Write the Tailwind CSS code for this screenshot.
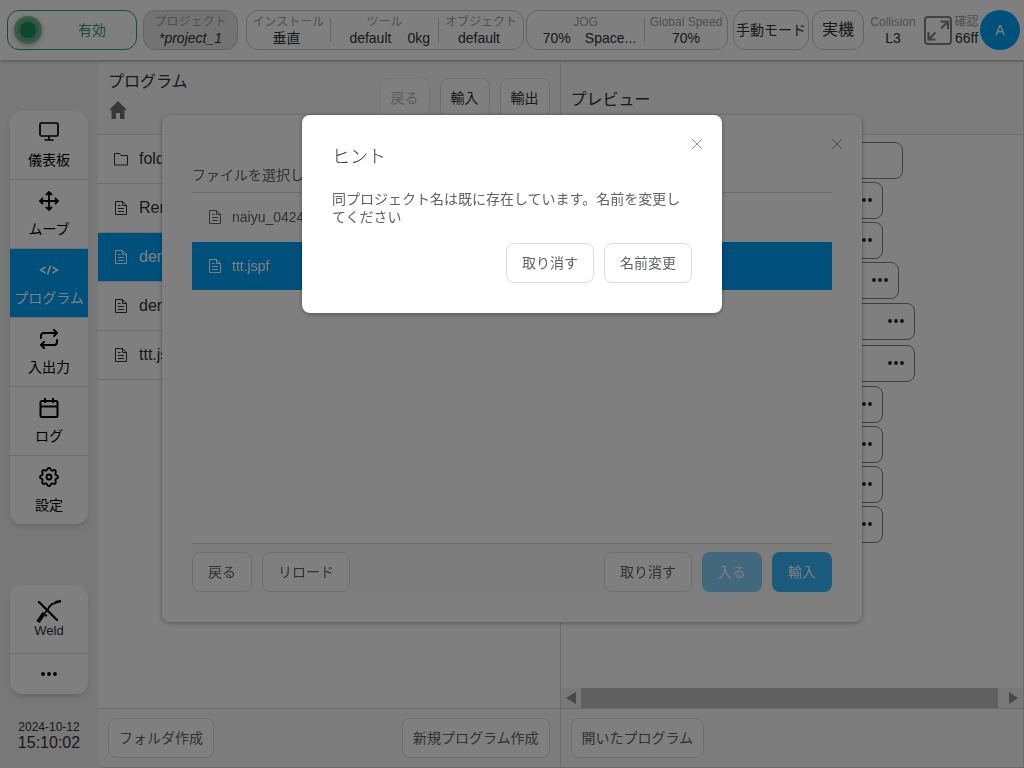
<!DOCTYPE html>
<html lang="ja">
<head>
    <meta charset="UTF-8">
    <meta name="viewport" content="width=device-width, initial-scale=1.0">
    <title>プログラム</title>
    <script src="https://cdn.jsdelivr.net/npm/@tailwindcss/browser@4"></script>
</head>
<body class="h-screen flex flex-col overflow-hidden bg-[#f0f0f0] text-[#303133] text-sm font-['Liberation_Sans','Noto_Sans_CJK_JP',sans-serif]">
    <!-- icons -->
    <svg class="hidden">
        <symbol id="doc" viewBox="0 0 16 16"><path d="M2.500 1.500h7l4 4v9h-11z M9.500 1.500v4h4 M5 5.500h2.500 M5 8.500h6 M5 11.500h6" fill="none" stroke="currentColor"/></symbol>
        <symbol id="folder" viewBox="0 0 16 16"><path d="M1.500 2.500h5l1.500 2h6.500v9.500h-13z" fill="none" stroke="currentColor"/></symbol>
        <symbol id="dots" viewBox="0 0 16 4"><g fill="currentColor"><circle cx="2" cy="2" r="1.900"/><circle cx="8" cy="2" r="1.900"/><circle cx="14" cy="2" r="1.900"/></g></symbol>
        <symbol id="close" viewBox="0 0 12 12"><path d="M1 1l10 10M11 1L1 11" fill="none" stroke="currentColor"/></symbol>
    </svg>

    <header class="relative h-[60px] shrink-0 flex items-center pl-[7px] pr-1 bg-white shadow-[0_1px_3px_rgba(0,0,0,0.3)] leading-4">
        <button class="w-[130px] h-10 mr-1.5 flex items-center rounded-xl border border-[#2a9d6a] text-[#2a9d6a] px-1.5">
            <span class="size-7 rounded-full bg-[#7dbf9e] flex items-center justify-center shadow-[0_2px_6px_rgba(0,0,0,0.25)]"><span class="size-4 rounded-full bg-[#1f8f5a] shadow-[0_0_4px_3px_rgba(31,143,90,0.5)]"></span></span>
            <span class="flex-1 text-center pl-3">有効</span>
        </button>
        <button class="w-[95px] h-10 mr-2 rounded-xl border border-[#c8c8c8] bg-[#e6e6e6] flex flex-col items-center justify-center">
            <span class="text-xs leading-4 text-[#a0a0a0]">プロジェクト</span>
            <span class="italic">*project_1</span>
        </button>
        <div class="w-[278px] h-10 mr-0.5 flex items-center rounded-xl border border-[#c8c8c8] text-center">
            <div class="w-[84px] border-r border-[#c8c8c8] h-6 flex flex-col justify-center whitespace-nowrap">
                <p class="text-xs leading-4 text-[#a0a0a0]">インストール</p>
                <p class="pr-1">垂直</p>
            </div>
            <div class="flex-1 border-r border-[#c8c8c8] h-6 flex flex-col justify-center">
                <p class="text-xs leading-4 text-[#a0a0a0]">ツール</p>
                <p class="flex justify-end gap-4 pr-2"><span>default</span><span>0kg</span></p>
            </div>
            <div class="w-[84px] flex flex-col justify-center whitespace-nowrap">
                <p class="text-xs leading-4 text-[#a0a0a0]">オブジェクト</p>
                <p class="pr-1">default</p>
            </div>
        </div>
        <div class="w-[202px] h-10 mr-[5px] flex items-center rounded-xl border border-[#c8c8c8] text-center">
            <div class="flex-1 border-r border-[#c8c8c8] h-6 flex flex-col justify-center">
                <p class="text-xs leading-4 text-[#a0a0a0]">JOG</p>
                <p class="flex justify-center gap-3.5 pl-2"><span>70%</span><span>Space...</span></p>
            </div>
            <div class="w-[82px] flex flex-col justify-center whitespace-nowrap">
                <p class="text-xs leading-4 text-[#a0a0a0]">Global Speed</p>
                <p>70%</p>
            </div>
        </div>
        <button class="w-[76px] h-10 mr-[3px] rounded-xl border border-[#c8c8c8] whitespace-nowrap">手動モード</button>
        <button class="w-[52px] h-10 mr-1 rounded-xl border border-[#c8c8c8] text-base">実機</button>
        <div class="w-[50px] text-center">
            <p class="text-xs leading-4 text-[#a0a0a0]">Collision</p>
            <p>L3</p>
        </div>
        <button class="ml-[5px] text-[#848484]" aria-label="全画面">
            <svg class="size-[30px]" viewBox="0 0 30 30" fill="none" stroke="currentColor" stroke-width="2"><rect x="2" y="2" width="26" height="27" rx="3"/><path d="M17.500 6.500h7.500v7.500M25 6.500l-7 7M12.500 24.500H5.500v-7.500M5.500 24.500l7-7" stroke-width="2.200"/></svg>
        </button>
        <div class="flex-1 text-center whitespace-nowrap">
            <p class="text-xs leading-4 text-[#a0a0a0]">確認</p>
            <p>66ff</p>
        </div>
        <button class="size-10 rounded-full bg-[#00a0f8] text-white">A</button>
    </header>

    <div class="flex-1 min-h-0 flex pt-0.5">
        <nav class="w-[98px] shrink-0 flex flex-col px-2.5 pt-[49px]">
            <div class="rounded-xl bg-white overflow-hidden shadow-md text-black divide-y divide-[#dcdcdc]">
                <a href="#" class="h-[69px] flex flex-col items-center pt-[11px] gap-2">
                    <svg class="size-5" viewBox="0 0 20 20" fill="none" stroke="currentColor" stroke-width="1.700"><rect x="1" y="1" width="18" height="13" rx="1.500"/><path d="M10 14v4.500M5.500 18h9"/></svg>
                    <span>儀表板</span>
                </a>
                <a href="#" class="h-[69px] flex flex-col items-center pt-[11px] gap-2">
                    <svg class="size-5" viewBox="0 0 20 20" fill="none" stroke="currentColor" stroke-width="1.800"><path d="M10 1v18M1 10h18M7 4l3-3 3 3M7 16l3 3 3-3M4 7l-3 3 3 3M16 7l3 3-3 3"/></svg>
                    <span>ムーブ</span>
                </a>
                <a href="#" class="h-[69px] flex flex-col items-center pt-[11px] gap-2 bg-[#00a0f8] text-white">
                    <svg class="size-5" viewBox="0 0 20 20" fill="none" stroke="currentColor" stroke-width="1.700"><path d="M6.500 7L1.500 10l5 3M13.500 7l5 3-5 3M11.500 5.500l-3 9"/></svg>
                    <span>プログラム</span>
                </a>
                <a href="#" class="h-[69px] flex flex-col items-center pt-[11px] gap-2">
                    <svg class="size-5" viewBox="0 0 20 20" fill="none" stroke="currentColor" stroke-width="2" stroke-linecap="round" stroke-linejoin="round"><path d="M15 1l3 3-3 3M18 4H5a3 3 0 0 0-3 3v2M5 19l-3-3 3-3M2 16h13a3 3 0 0 0 3-3v-2"/></svg>
                    <span>入出力</span>
                </a>
                <a href="#" class="h-[69px] flex flex-col items-center pt-[11px] gap-2">
                    <svg class="size-5" viewBox="0 0 20 20" fill="none" stroke="currentColor" stroke-width="2"><rect x="1.500" y="3" width="17" height="16" rx="1.500"/><path d="M1.500 8.500h17M6 0v5M14 0v5"/></svg>
                    <span>ログ</span>
                </a>
                <a href="#" class="h-[68px] flex flex-col items-center pt-[11px] gap-2">
                    <svg class="size-5" viewBox="0 0 24 24" fill="none" stroke="currentColor" stroke-width="2.300" stroke-linejoin="round"><circle cx="12" cy="12" r="3"/><path d="M10.325 2.700c.426-1.756 2.924-1.756 3.350 0a1.724 1.724 0 0 0 2.573 1.066c1.543-.94 3.310.826 2.370 2.370a1.724 1.724 0 0 0 1.065 2.572c1.756.426 1.756 2.924 0 3.350a1.724 1.724 0 0 0-1.066 2.573c.94 1.543-.826 3.310-2.370 2.370a1.724 1.724 0 0 0-2.572 1.065c-.426 1.756-2.924 1.756-3.350 0a1.724 1.724 0 0 0-2.573-1.066c-1.543.94-3.310-.826-2.370-2.370a1.724 1.724 0 0 0-1.065-2.572c-1.756-.426-1.756-2.924 0-3.350a1.724 1.724 0 0 0 1.066-2.573c-.94-1.543.826-3.310 2.370-2.370 1 .608 2.296.07 2.572-1.065z" transform="translate(-2.400 -.45) scale(1.200)" stroke-width="1.900"/></svg>
                    <span>設定</span>
                </a>
            </div>
            <div class="mt-[61px] rounded-xl bg-white overflow-hidden shadow-md text-black divide-y divide-[#dcdcdc]">
                <a href="#" class="h-[69px] flex flex-col items-center pt-3.5 leading-4 text-[#303133]">
                    <svg class="w-[26px] h-6" viewBox="0 0 26 24" fill="none" stroke="#0a0a20"><path d="M3 3l18 18" stroke-width="2.400" stroke-linecap="round"/><path d="M2 23l6-9" stroke-width="4"/><path d="M8 15l4-5q3-6 8-6" stroke-width="1.800"/><path d="M19 3.500l6-1.500" stroke-width="2.600"/><path d="M9 17l2-1" stroke-width="2"/></svg>
                    <span class="text-[13px]">Weld</span>
                </a>
                <a href="#" class="h-10 flex items-center justify-center" aria-label="その他"><svg class="w-4 h-1"><use href="#dots"/></svg></a>
            </div>
            <div class="mt-auto mb-[17px] text-center">
                <p class="text-xs leading-4">2024-10-12</p>
                <p class="text-base leading-4">15:10:02</p>
            </div>
        </nav>

        <main class="flex-1 min-w-0 flex rounded-l-lg overflow-hidden bg-white border-r border-b border-[#d8d8d8]">
            <section class="w-1/2 flex flex-col border-r border-[#d8d8d8]">
                <div class="h-[73px] shrink-0 flex justify-between bg-[#fafafa] border-b border-[#d8d8d8] px-2.5">
                    <div class="pt-2">
                        <h2 class="text-base">プログラム</h2>
                        <svg class="mt-1 w-5 h-6 text-[#707070]" viewBox="0 0 20 24" fill="currentColor"><path d="M10 3l9 9h-2.500v9H12v-6H8v6H3.500v-9H1z"/></svg>
                    </div>
                    <div class="flex gap-2.5 pt-4">
                        <button class="w-[50px] h-10 rounded-lg border border-[#ebebeb] bg-white text-[#b4b4b4]" disabled>戻る</button>
                        <button class="w-[50px] h-10 rounded-lg border border-[#dcdcdc] bg-white">輸入</button>
                        <button class="w-[50px] h-10 rounded-lg border border-[#dcdcdc] bg-white">輸出</button>
                    </div>
                </div>
                <ul class="flex-1 text-base">
                    <li class="h-[49px] flex items-center gap-2.5 pl-[15px] border-b border-[#dcdcdc]"><svg class="size-4"><use href="#folder"/></svg>folder</li>
                    <li class="h-[49px] flex items-center gap-2.5 pl-[15px] border-b border-[#dcdcdc]"><svg class="size-4"><use href="#doc"/></svg>Rename.jspf</li>
                    <li class="h-[49px] flex items-center gap-2.5 pl-[15px] border-b border-[#dcdcdc] bg-[#00a0f8] text-white"><svg class="size-4"><use href="#doc"/></svg>demo.jspf</li>
                    <li class="h-[49px] flex items-center gap-2.5 pl-[15px] border-b border-[#dcdcdc]"><svg class="size-4"><use href="#doc"/></svg>demo1.jspf</li>
                    <li class="h-[49px] flex items-center gap-2.5 pl-[15px] border-b border-[#dcdcdc]"><svg class="size-4"><use href="#doc"/></svg>ttt.jspf</li>
                </ul>
                <div class="h-[59px] shrink-0 flex items-center justify-between px-2.5 bg-[#fafafa] border-t border-[#d8d8d8] text-[#606266]">
                    <button class="h-10 px-2.5 rounded-lg border border-[#dcdcdc] bg-white">フォルダ作成</button>
                    <button class="h-10 px-2.5 rounded-lg border border-[#dcdcdc] bg-white">新規プログラム作成</button>
                </div>
            </section>

            <section class="flex-1 min-w-0 flex flex-col">
                <div class="h-[73px] shrink-0 flex items-center bg-[#fafafa] border-b border-[#d8d8d8] px-2.5 pt-1">
                    <h2 class="text-base">プレビュー</h2>
                </div>
                <div class="flex-1 pt-[5px] pl-2.5 text-[#202020]">
                    <div class="h-10 flex items-center"><div class="w-[332px] h-[37px] rounded-lg border border-[#808080]"></div></div>
                    <div class="h-10 flex items-center"><div class="w-[312px] h-[37px] rounded-lg border border-[#808080] flex items-center justify-end pr-2.5"><svg class="w-4 h-1"><use href="#dots"/></svg></div></div>
                    <div class="h-10 flex items-center"><div class="w-[312px] h-[37px] rounded-lg border border-[#808080] flex items-center justify-end pr-2.5"><svg class="w-4 h-1"><use href="#dots"/></svg></div></div>
                    <div class="h-10 flex items-center"><div class="w-[328px] h-[37px] rounded-lg border border-[#808080] flex items-center justify-end pr-2.5"><svg class="w-4 h-1"><use href="#dots"/></svg></div></div>
                    <div class="h-[42px] flex items-center"><div class="w-[344px] h-[37px] rounded-lg border border-[#808080] flex items-center justify-end pr-2.5"><svg class="w-4 h-1"><use href="#dots"/></svg></div></div>
                    <div class="h-[42px] flex items-center"><div class="w-[344px] h-[37px] rounded-lg border border-[#808080] flex items-center justify-end pr-2.5"><svg class="w-4 h-1"><use href="#dots"/></svg></div></div>
                    <div class="h-10 flex items-center"><div class="w-[312px] h-[37px] rounded-lg border border-[#808080] flex items-center justify-end pr-2.5"><svg class="w-4 h-1"><use href="#dots"/></svg></div></div>
                    <div class="h-10 flex items-center"><div class="w-[312px] h-[37px] rounded-lg border border-[#808080] flex items-center justify-end pr-2.5"><svg class="w-4 h-1"><use href="#dots"/></svg></div></div>
                    <div class="h-10 flex items-center"><div class="w-[312px] h-[37px] rounded-lg border border-[#808080] flex items-center justify-end pr-2.5"><svg class="w-4 h-1"><use href="#dots"/></svg></div></div>
                    <div class="h-10 flex items-center"><div class="w-[312px] h-[37px] rounded-lg border border-[#808080] flex items-center justify-end pr-2.5"><svg class="w-4 h-1"><use href="#dots"/></svg></div></div>
                </div>
                <!-- scrollbar -->
                <div class="h-5 shrink-0 flex items-center bg-[#f1f1f1] text-[#909090]">
                    <svg class="size-5" viewBox="0 0 20 20" fill="currentColor"><path d="M5 10l10-6v12z"/></svg>
                    <div class="flex-1 h-full bg-[#c1c1c1] mr-[5px]"></div>
                    <svg class="size-5" viewBox="0 0 20 20" fill="currentColor"><path d="M15 10L6 4v12z"/></svg>
                </div>
                <div class="h-[59px] shrink-0 flex items-center px-2.5 bg-[#fafafa] border-t border-[#d8d8d8] text-[#606266]">
                    <button class="h-10 px-2.5 rounded-lg border border-[#dcdcdc] bg-white">開いたプログラム</button>
                </div>
            </section>
        </main>
    </div>

    <!-- import dialog -->
    <div class="fixed inset-0 flex justify-center items-start pt-[115px] text-[#606266]">
        <div role="dialog" class="w-[700px] rounded-lg bg-white shadow-[0_1px_4px_rgba(0,0,0,0.35)] p-[30px] relative">
            <button class="absolute top-[23px] right-[19px] text-[#909399]" aria-label="閉じる"><svg class="size-3"><use href="#close"/></svg></button>
            <h2 class="h-12 flex items-end pb-[7px] border-b border-[#d8d8d8]">ファイルを選択してください</h2>
            <ul class="h-[350px]">
                <li class="h-[49px] flex items-center gap-[9px] pl-[15px] border-b border-white"><svg class="size-4"><use href="#doc"/></svg>naiyu_0424.jspf</li>
                <li class="h-[48px] flex items-center gap-[9px] pl-[15px] bg-[#00a0f8] text-white"><svg class="size-4"><use href="#doc"/></svg>ttt.jspf</li>
            </ul>
            <div class="flex gap-2.5 pt-2 bg-[#fafafa] border-t border-[#d8d8d8]">
                <button class="w-[60px] h-10 rounded-lg border border-[#dcdcdc] bg-white">戻る</button>
                <button class="w-[88px] h-10 rounded-lg border border-[#dcdcdc] bg-white">リロード</button>
                <button class="w-[88px] h-10 rounded-lg border border-[#dcdcdc] bg-white ml-auto">取り消す</button>
                <button class="w-[60px] h-10 rounded-lg bg-[#84d0fa] text-white" disabled>入る</button>
                <button class="w-[60px] h-10 rounded-lg bg-[#33b4fa] text-white">輸入</button>
            </div>
        </div>
    </div>

    <!-- hint dialog -->
    <div class="fixed inset-0 flex justify-center items-start pt-[115px] bg-black/50 text-[#606266]">
        <div role="alertdialog" class="w-[420px] rounded-lg bg-white shadow-[0_1px_4px_rgba(0,0,0,0.35)] p-[30px] relative">
            <button class="absolute top-[23px] right-[19px] text-[#909399]" aria-label="閉じる"><svg class="size-3"><use href="#close"/></svg></button>
            <h2 class="text-lg leading-6 font-light text-[#303133]">ヒント</h2>
            <p class="mt-[21px] leading-[18px]">同プロジェクト名は既に存在しています。名前を変更してください</p>
            <div class="mt-[17px] flex justify-end gap-2.5">
                <button class="w-[88px] h-10 rounded-lg border border-[#dcdcdc] bg-white">取り消す</button>
                <button class="w-[88px] h-10 rounded-lg border border-[#dcdcdc] bg-white">名前変更</button>
            </div>
        </div>
    </div>
</body>
</html>
